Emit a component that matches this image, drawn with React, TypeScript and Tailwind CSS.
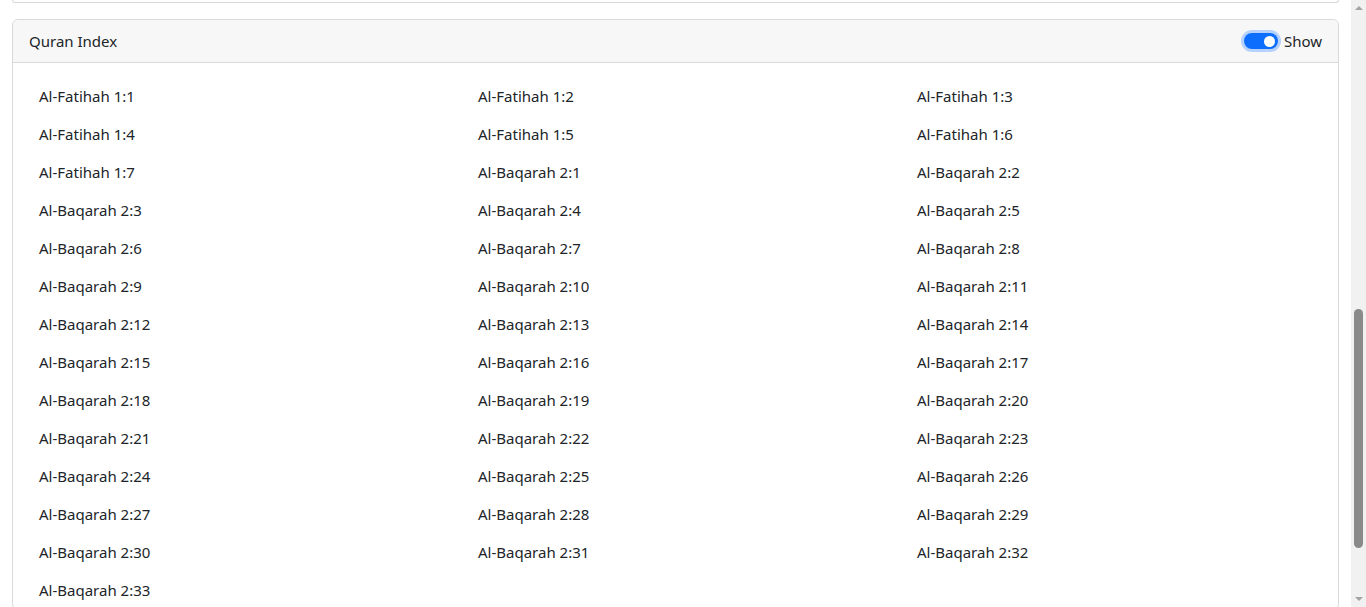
import React from "react";

const items: string[] = [
  ...Array.from({ length: 7 }, (_, i) => `Al-Fatihah 1:${i + 1}`),
  ...Array.from({ length: 33 }, (_, i) => `Al-Baqarah 2:${i + 1}`),
];

export default function App() {
  return (
    <div
      className="flex h-[607px] w-[1366px] overflow-hidden bg-white text-[#212529]"
      style={{ fontFamily: '"Noto Sans", "Open Sans", sans-serif' }}
    >
      <div className="flex-1 overflow-hidden px-[12px]">
        <div className="h-[3px] rounded-b-[6px] border-x border-b border-[#d9d9d9]" />
        <div className="mt-[16px] rounded-[6px] border border-[#d9d9d9]">
          <div className="flex h-[43px] items-center justify-between rounded-t-[6px] border-b border-[#d9d9d9] bg-[#f7f7f7] pl-[16px] pr-[16px]">
            <span className="text-[15px]">Quran Index</span>
            <div className="flex items-center gap-[6px]">
              <div className="flex h-[16px] w-[34px] items-center justify-end rounded-full bg-[#0d6efd] pr-[3px] shadow-[0_0_0_3px_#b6d2fc]">
                <div className="h-[11px] w-[11px] rounded-full bg-white" />
              </div>
              <span className="text-[15px]">Show</span>
            </div>
          </div>
          <div className="grid grid-cols-3 px-[4px] pt-[14px]">
            {items.map((t) => (
              <div key={t} className="flex h-[38px] items-center pl-[22px] text-[15px]">
                {t}
              </div>
            ))}
          </div>
        </div>
      </div>
      <div className="relative h-full w-[15px] bg-[#f1f1f1]">
        <div className="absolute left-[4px] top-[6px] h-0 w-0 border-x-[4px] border-b-[4px] border-x-transparent border-b-[#a3a3a3]" />
        <div className="absolute left-[3px] top-[309px] h-[239px] w-[9px] rounded-full bg-[#8a8a8a]" />
        <div className="absolute bottom-[6px] left-[4px] h-0 w-0 border-x-[4px] border-t-[4px] border-x-transparent border-t-[#a3a3a3]" />
      </div>
    </div>
  );
}
